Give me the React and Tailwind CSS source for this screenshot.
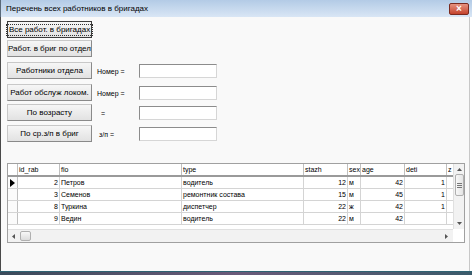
import React from 'react';

const rows = [
  { id: 2, fio: 'Петров', type: 'водитель', stazh: 12, sex: 'м', age: 42, deti: 1, current: true },
  { id: 3, fio: 'Семенов', type: 'ремонтник состава', stazh: 15, sex: 'м', age: 45, deti: 1 },
  { id: 8, fio: 'Туркина', type: 'диспетчер', stazh: 22, sex: 'ж', age: 42, deti: 1 },
  { id: 9, fio: 'Ведин', type: 'водитель', stazh: 22, sex: 'м', age: 42, deti: '' },
];

const WinButton = ({ children, isDefault, className = '' }) => (
  <div
    className={`w-[85px] h-[17px] shrink-0 flex items-center justify-center bg-gradient-to-b from-[#f6f6f6] to-[#e2e2e2] border text-[8px] ${
      isDefault ? 'border-[#3c3c3c]' : 'border-t-[#c8c8c8] border-l-[#c8c8c8] border-r-[#8a8a8a] border-b-[#8a8a8a]'
    } ${className}`}
  >
    <span className={`px-[2px] leading-[10px] whitespace-nowrap ${isDefault ? 'outline outline-1 outline-dotted outline-[#333]' : ''}`}>
      {children}
    </span>
  </div>
);

const Field = () => (
  <div className="w-[78px] h-[14px] bg-white border border-t-[#8c8c8c] border-l-[#8c8c8c] border-r-[#d6d6d6] border-b-[#d6d6d6]" />
);

const Row = ({ label, button, className = '', labelClass = '' }) => (
  <div className={`flex items-start ${className}`}>
    <WinButton>{button}</WinButton>
    <span className={`w-[47px] pl-[5px] mt-[6px] text-[7px] leading-[8px] whitespace-nowrap ${labelClass}`}>{label}</span>
    <div className="mt-[2px]"><Field /></div>
  </div>
);

const cols = [
  { key: 'id', name: 'id_rab', w: 'w-[42px]', right: true },
  { key: 'fio', name: 'fio', w: 'w-[122px]' },
  { key: 'type', name: 'type', w: 'w-[122px]' },
  { key: 'stazh', name: 'stazh', w: 'w-[44px]', right: true },
  { key: 'sex', name: 'sex', w: 'w-[13px]' },
  { key: 'age', name: 'age', w: 'w-[44px]', right: true },
  { key: 'deti', name: 'deti', w: 'w-[42px]', right: true },
  { key: 'z', name: 'z', w: 'w-[10px]' },
];

export default function App() {
  return (
    <div className="w-[472px] h-[275px] overflow-hidden bg-white flex flex-col text-[8px] text-black antialiased font-['Liberation_Sans',Arial,sans-serif]">
      {/* title bar */}
      <div className="h-[17px] shrink-0 flex items-center justify-between pl-[5px] pr-[3px] bg-gradient-to-b from-[#b3cbe6] to-[#d9e6f5] border-l border-[#5a6a7a]">
        <span className="leading-[10px] text-[8px]">Перечень всех работников в бригадах</span>
        <div className="w-[20px] h-[12px] rounded-[2px] border border-[#7a2a1f] bg-gradient-to-b from-[#e5917f] to-[#c4422c] flex items-center justify-center text-white text-[10px] font-bold leading-none">
          ×
        </div>
      </div>

      {/* body */}
      <div className="flex-1 flex flex-col bg-[#f9f9f9] border-l border-[#4a4a4a] border-r border-r-[#c8c8c8] mr-[2px] pl-[6px]">
        <WinButton isDefault className="mt-[4px]">Все работ. в бригадах</WinButton>
        <WinButton className="mt-[2px]">Работ. в бриг по отдел</WinButton>
        <Row className="mt-[5px]" button="Работники отдела" label="Номер =" />
        <Row className="mt-[5px]" button="Работ обслуж локом." label="Номер =" />
        <Row className="mt-[3px]" button="По возрасту" label="=" labelClass="pl-[9px]" />
        <Row className="mt-[4px]" button="По ср.з/п в бриг" label="з/п =" labelClass="pl-[7px]" />

        {/* data grid */}
        <div className="mt-[21px] w-[458px] h-[80px] bg-white border border-[#a0a0a0] flex flex-col text-[7px]">
          <div className="flex flex-1 min-h-0">
            <div className="flex-1 overflow-hidden">
              {/* header */}
              <div className="flex h-[13px] border-b-2 border-[#9a9a9a] bg-white">
                <div className="w-[10px] shrink-0 border-r border-[#c0c0c0]" />
                {cols.map(c => (
                  <div key={c.key} className={`${c.w} shrink-0 border-r border-[#c0c0c0] pl-[1px] leading-[12px] overflow-hidden whitespace-nowrap`}>
                    {c.name}
                  </div>
                ))}
              </div>
              {rows.map(r => (
                <div key={r.id} className="flex h-[12px] border-b border-[#d4d4d4]">
                  <div className="w-[10px] shrink-0 border-r border-[#c0c0c0] bg-[#fbfbfb] flex items-center pl-[2px]">
                    {r.current && (
                      <svg width="5" height="8" viewBox="0 0 5 8"><path d="M0 0 L5 4 L0 8 Z" fill="#000" /></svg>
                    )}
                  </div>
                  {cols.map(c => (
                    <div
                      key={c.key}
                      className={`${c.w} shrink-0 border-r border-[#d4d4d4] px-[1px] leading-[11px] text-black overflow-hidden whitespace-nowrap ${c.right ? 'text-right' : ''}`}
                    >
                      {c.key === 'z' ? '' : r[c.key]}
                    </div>
                  ))}
                </div>
              ))}
            </div>
            {/* vertical scrollbar */}
            <div className="w-[11px] shrink-0 bg-[#f2f2f2] border-l border-[#e0e0e0] flex flex-col items-center py-[4px]">
              <svg width="5" height="3" viewBox="0 0 5 3"><path d="M0 3 L2.5 0 L5 3 Z" fill="#555" /></svg>
              <div className="mt-[3px] w-[9px] h-[22px] rounded-[2px] border border-[#b0b0b0] bg-gradient-to-r from-[#f8f8f8] to-[#e4e4e4] flex flex-col items-center justify-center gap-[1px]">
                <div className="w-[5px] h-px bg-[#777]" />
                <div className="w-[5px] h-px bg-[#777]" />
                <div className="w-[5px] h-px bg-[#777]" />
              </div>
              <div className="flex-1" />
              <svg width="5" height="3" viewBox="0 0 5 3"><path d="M0 0 L2.5 3 L5 0 Z" fill="#555" /></svg>
            </div>
          </div>
          {/* horizontal scrollbar */}
          <div className="h-[13px] shrink-0 flex">
            <div className="flex-1 bg-[#f2f2f2] border-t border-[#e0e0e0] flex items-center pl-[4px] pr-[5px]">
              <svg width="3" height="5" viewBox="0 0 3 5"><path d="M3 0 L0 2.5 L3 5 Z" fill="#555" /></svg>
              <div className="ml-[5px] w-[11px] h-[10px] rounded-[2px] border border-[#b0b0b0] bg-gradient-to-b from-[#f8f8f8] to-[#dcdcdc]" />
              <div className="flex-1" />
              <svg width="3" height="5" viewBox="0 0 3 5"><path d="M0 0 L3 2.5 L0 5 Z" fill="#555" /></svg>
            </div>
            <div className="w-[11px] shrink-0 bg-white" />
          </div>
        </div>
        <div className="flex-1" />
      </div>

      {/* window bottom edge and taskbar remnant */}
      <div className="h-[1px] shrink-0 bg-[#2f6272]" />
      <div className="h-[3px] shrink-0 bg-gradient-to-r from-[#3a4a5a] via-[#6a5a7a] to-[#3a5a6a]" />
    </div>
  );
}
